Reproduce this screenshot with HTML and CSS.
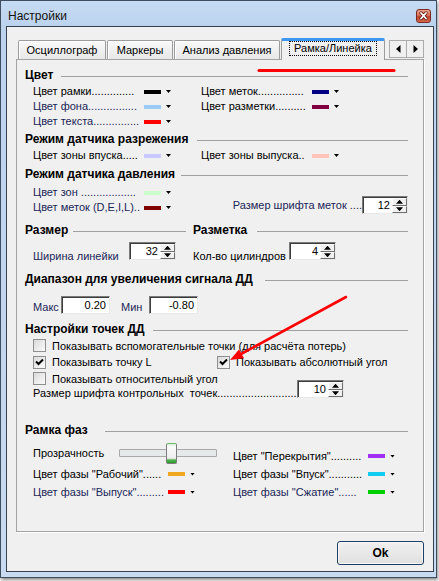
FILE: index.html
```html
<!DOCTYPE html>
<html lang="ru">
<head>
<meta charset="utf-8">
<title>Настройки</title>
<link rel="stylesheet" href="styles.css">
</head>
<body>
<div class="window">
  <div class="titlebar">
    <span class="title">Настройки</span>
    <div class="close"><svg width="13" height="12" viewBox="0 0 13 12"><path d="M4 3l5 5.5M9 3l-5 5.5" stroke="#6a2014" stroke-width="3.4" stroke-linecap="round"/><path d="M4 3l5 5.5M9 3l-5 5.5" stroke="#fff" stroke-width="1.8" stroke-linecap="round"/></svg></div>
  </div>
  <div class="client">
    <div class="tabs">
      <div class="tab w1">Осциллограф</div>
      <div class="tab w2">Маркеры</div>
      <div class="tab w3">Анализ давления</div>
      <div class="tab active"><span class="focus">Рамка/Линейка</span></div>
      <div class="tabscroll">
        <div class="tsb"><svg width="5" height="8" viewBox="0 0 5 8"><polygon points="4.5,0 4.5,8 0,4" fill="#000"/></svg></div>
        <div class="tsb"><svg width="5" height="8" viewBox="0 0 5 8"><polygon points="0.5,0 0.5,8 5,4" fill="#000"/></svg></div>
      </div>
    </div>
    <div class="panel">
      <div class="hd m8"><b class="hw36">Цвет</b><i class="rule"></i></div>
      <div class="crow m2">
        <div class="cc"><span class="lbl">Цвет рамки..............</span><i class="sw c-black"></i><i class="dd"></i></div>
        <div class="cc"><span class="lbl">Цвет меток...............</span><i class="sw c-navy"></i><i class="dd"></i></div>
      </div>
      <div class="crow">
        <div class="cc"><span class="lbl nv">Цвет фона................</span><i class="sw c-lblue"></i><i class="dd"></i></div>
        <div class="cc"><span class="lbl">Цвет разметки..........</span><i class="sw c-plum"></i><i class="dd"></i></div>
      </div>
      <div class="crow">
        <div class="cc"><span class="lbl nv">Цвет текста...............</span><i class="sw c-red"></i><i class="dd"></i></div>
      </div>

      <div class="hd m3"><b class="hw172">Режим датчика разрежения</b><i class="rule"></i></div>
      <div class="crow m2">
        <div class="cc"><span class="lbl">Цвет зоны впуска.....</span><i class="sw c-lav"></i><i class="dd"></i></div>
        <div class="cc"><span class="lbl">Цвет зоны выпуска..</span><i class="sw c-pink"></i><i class="dd"></i></div>
      </div>

      <div class="hd m4"><b class="hw156">Режим датчика давления</b><i class="rule"></i></div>
      <div class="crow m4">
        <div class="cc"><span class="lbl nv">Цвет зон ..................</span><i class="sw c-lgreen"></i><i class="dd"></i></div>
      </div>
      <div class="crow">
        <div class="cc"><span class="lbl nv">Цвет меток (D,E,I,L)..</span><i class="sw c-maroon"></i><i class="dd"></i></div>
        <div class="cc endcell"><span class="nv rlbl">Размер шрифта меток ....</span>
          <div class="spin w46"><span class="val">12</span><span class="arrows"><span class="ab"><i class="up"></i></span><span class="ab"><i class="down"></i></span></span></div>
        </div>
      </div>

      <div class="hd2 m8">
        <div class="hd half"><b class="hw48">Размер</b><i class="rule"></i></div>
        <div class="hd grow"><b class="hw64">Разметка</b><i class="rule"></i></div>
      </div>
      <div class="srow m5">
        <div class="scell"><span class="slbl nv">Ширина линейки</span>
          <div class="spin"><span class="val">32</span><span class="arrows"><span class="ab"><i class="up"></i></span><span class="ab"><i class="down"></i></span></span></div>
        </div>
        <div class="scell"><span class="slbl">Кол-во цилиндров</span>
          <div class="spin"><span class="val">4</span><span class="arrows"><span class="ab"><i class="up"></i></span><span class="ab"><i class="down"></i></span></span></div>
        </div>
      </div>

      <div class="hd m12"><b class="hw240">Диапазон для увеличения сигнала ДД</b><i class="rule"></i></div>
      <div class="erow m10">
        <span class="elbl nv">Макс</span><span class="edit">0.20</span>
        <span class="elbl nv gapl">Мин</span><span class="edit">-0.80</span>
      </div>

      <div class="hd m8"><b class="hw128">Настройки точек ДД</b><i class="rule"></i></div>
      <div class="cbrow h17 m1">
        <label class="cbi"><span class="box"></span>Показывать вспомогательные точки (для расчёта потерь)</label>
      </div>
      <div class="cbrow h16">
        <label class="cbi first"><span class="box"><svg width="9" height="8" viewBox="0 0 9 8"><polyline points="1,3.5 3.5,6 8,1.5" fill="none" stroke="#000" stroke-width="2"/></svg></span>Показывать точку L</label>
        <label class="cbi"><span class="box"><svg width="9" height="8" viewBox="0 0 9 8"><polyline points="1,3.5 3.5,6 8,1.5" fill="none" stroke="#000" stroke-width="2"/></svg></span>Показывать абсолютный угол</label>
      </div>
      <div class="cbrow h17">
        <label class="cbi"><span class="box"></span>Показывать относительный угол</label>
      </div>
      <div class="frow">
        <span class="flbl">Размер шрифта контрольных&nbsp; точек..........................</span>
        <div class="spin"><span class="val">10</span><span class="arrows"><span class="ab"><i class="up"></i></span><span class="ab"><i class="down"></i></span></span></div>
      </div>

      <div class="hd m23"><b class="hw80">Рамка фаз</b><i class="rule"></i></div>
      <div class="phase">
        <div class="pl">
          <div class="slrow">
            <span class="sllbl">Прозрачность</span>
            <div class="slider"><div class="track"></div><div class="thumb"></div></div>
          </div>
          <div class="prow"><span class="plbl">Цвет фазы "Рабочий"......</span><i class="sw c-orange"></i><i class="dd"></i></div>
          <div class="prow"><span class="plbl nv">Цвет фазы "Выпуск".........</span><i class="sw c-red"></i><i class="dd"></i></div>
        </div>
        <div class="pr">
          <div class="prow"><span class="plbl">Цвет "Перекрытия"..........</span><i class="sw c-purple"></i><i class="dd"></i></div>
          <div class="prow"><span class="plbl">Цвет фазы "Впуск"...........</span><i class="sw c-cyan"></i><i class="dd"></i></div>
          <div class="prow"><span class="plbl nv">Цвет фазы "Сжатие"......</span><i class="sw c-green"></i><i class="dd"></i></div>
        </div>
      </div>
    </div>
    <div class="footer"><div class="okbtn">Ok</div></div>
  </div>
  <svg class="annot" width="439" height="581" viewBox="0 0 439 581">
    <path d="M259 70.5H394" stroke="#ff0000" stroke-width="3" stroke-linecap="round"/>
    <path d="M346 297L241 354" stroke="#ff0000" stroke-width="2.6" stroke-linecap="round"/>
    <polygon points="230,360 244,358.2 239,349.4" fill="#ff0000"/>
  </svg>
</div>
</body>
</html>
```

FILE: styles.css
```css
* { box-sizing: border-box; }
html, body { margin: 0; padding: 0; }
body {
  width: 439px; height: 581px; overflow: hidden; background: #ffffff;
  font-family: "Liberation Sans", Arial, sans-serif; font-size: 11px; color: #000;
}
i { font-style: normal; display: block; }
label { display: flex; align-items: center; }

.window {
  position: relative; width: 437px; height: 578px;
  border: 1px solid #3f4e5e;
  background: linear-gradient(180deg, #c6dbf3 0, #bcd3ee 25px, #c2d6ee 60%, #c8dbf0 100%);
  box-shadow: 1px 2px 3px rgba(0,0,0,.45);
}
.titlebar { display: flex; justify-content: space-between; align-items: flex-start; height: 25px; padding: 0 5px 0 7px; }
.title { margin-top: 7px; line-height: 16px; font-size: 12px; color: #111; }
.close {
  margin-top: 8px; width: 15px; height: 14px; border: 1px solid #7a2a1e; border-radius: 3px;
  background: linear-gradient(180deg, #eca48f 0, #d9735b 45%, #c2452e 55%, #d56a50 100%);
  display: flex; align-items: center; justify-content: center;
}

.client {
  margin-left: 5px; width: 428px; height: 546px; border: 1px solid #35414e;
  background: #f0f0f0; padding: 11px 9px 0;
}

.tabs { display: flex; align-items: flex-end; height: 21px; padding-left: 2px; position: relative; z-index: 2; }
.tab {
  height: 19px; margin-right: 1px; border: 1px solid #9c9c9c; border-bottom: 0; border-radius: 2px 2px 0 0;
  background: linear-gradient(180deg, #f9f9f9, #e7e7e7); box-shadow: inset 1px 1px 0 #fff;
  text-align: center; line-height: 18px; white-space: nowrap;
}
.w1 { width: 88px; } .w2 { width: 66px; } .w3 { width: 106px; }
.tab.active {
  width: 104px; height: 22px; margin-bottom: -1px; border-top: 3px solid #3d97f1;
  background: #f0f0f0; box-shadow: none; display: flex; justify-content: center; align-items: flex-start;
}
.focus { border: 1px dotted #000; padding: 0 4px; line-height: 13px; height: 15px; }
.tabscroll { display: flex; margin-left: 3px; margin-bottom: 1px; height: 18px; }
.tsb { width: 18px; height: 18px; border: 1px solid #ababab; background: #f0f0f0; display: flex; align-items: center; justify-content: center; }
.tsb + .tsb { margin-left: -1px; }

.panel {
  height: 473px; border: 1px solid #a3a3a3; background: #f0f0f0; padding: 0 15px 0 8px;
  position: relative; z-index: 1; box-shadow: 1px 1px 0 #ffffff;
}

.m1 { margin-top: 1px; } .m2 { margin-top: 2px; } .m3 { margin-top: 3px; } .m4 { margin-top: 4px; }
.m5 { margin-top: 5px; } .m8 { margin-top: 8px; } .m10 { margin-top: 10px; } .m12 { margin-top: 12px; } .m23 { margin-top: 23px; }

.hd { display: flex; align-items: center; height: 14px; }
.hd b { font-size: 12px; font-weight: bold; line-height: 14px; white-space: nowrap; flex-shrink: 0; padding-right: 3px; }
.rule { flex: 1; height: 1px; background: #a0a0a0; margin-top: 3px; }
.hw36 { min-width: 36px; } .hw172 { min-width: 172px; } .hw156 { min-width: 156px; } .hw48 { min-width: 48px; }
.hw64 { min-width: 64px; } .hw240 { min-width: 240px; } .hw128 { min-width: 128px; } .hw80 { min-width: 80px; }
.hd2 { display: flex; }
.half { width: 168px; padding-right: 7px; }
.grow { flex: 1; }

.nv { color: #1b2658; }

.crow { display: flex; align-items: center; height: 15px; padding-left: 8px; }
.cc { display: flex; align-items: center; width: 168px; flex-shrink: 0; }
.lbl { width: 111px; flex-shrink: 0; white-space: nowrap; overflow: hidden; line-height: 15px; }
.sw { width: 17px; height: 4px; flex-shrink: 0; }
.dd { width: 5px; height: 3px; margin-left: 5px; background: #000; clip-path: polygon(0 0, 100% 0, 50% 100%); }
.endcell { flex: 1; width: auto; justify-content: flex-end; align-self: flex-start; margin-top: -4px; height: 18px; }
.rlbl { white-space: nowrap; line-height: 17px; }

.c-black { background: #000; } .c-navy { background: #000080; } .c-lblue { background: #9ccbf8; }
.c-plum { background: #800040; } .c-red { background: #ff0000; } .c-lav { background: #c8c8ff; }
.c-pink { background: #ffc4b8; } .c-lgreen { background: #ccffcc; } .c-maroon { background: #800000; }
.c-orange { background: #f0a820; } .c-purple { background: #a030f8; } .c-cyan { background: #10ccf0; } .c-green { background: #00d000; }

.spin {
  display: flex; width: 47px; height: 18px; flex-shrink: 0;
  border: 1px solid; border-color: #7a7a7a #e8e8e8 #e8e8e8 #7a7a7a;
  box-shadow: inset 1px 1px 0 #3c3c3c; background: #fff; padding: 1px 0 0 1px;
}
.spin.w46 { width: 46px; }
.val { flex: 1; text-align: right; padding-right: 2px; line-height: 15px; }
.arrows { width: 15px; display: flex; flex-direction: column; }
.ab {
  flex: 1; display: flex; align-items: center; justify-content: center; background: #f0f0f0;
  border: 1px solid; border-color: #fcfcfc #6e6e6e #6e6e6e #fcfcfc;
}
.up, .down { width: 7px; height: 4px; background: #000; }
.up { clip-path: polygon(50% 0, 100% 100%, 0 100%); }
.down { clip-path: polygon(0 0, 100% 0, 50% 100%); }

.srow { display: flex; height: 18px; padding-left: 8px; }
.scell { display: flex; align-items: flex-start; width: 160px; flex-shrink: 0; }
.slbl { width: 96px; line-height: 14px; margin-top: 7px; white-space: nowrap; flex-shrink: 0; }

.erow { display: flex; align-items: center; height: 18px; padding-left: 8px; }
.elbl { width: 28px; padding-top: 3px; }
.gapl { margin-left: 11px; }
.edit {
  width: 49px; height: 18px; text-align: right; padding-right: 3px; line-height: 16px; background: #fff;
  border: 1px solid; border-color: #7a7a7a #e8e8e8 #e8e8e8 #7a7a7a; box-shadow: inset 1px 1px 0 #3c3c3c;
}

.cbrow { display: flex; align-items: center; padding-left: 8px; }
.h17 { height: 17px; } .h16 { height: 16px; }
.cbi { white-space: nowrap; }
.cbi.first { width: 184px; }
.box {
  width: 13px; height: 13px; margin-right: 6px; flex-shrink: 0; border: 1px solid #8e8f8f;
  background: linear-gradient(135deg, #dadada, #fbfbfb); display: flex; align-items: center; justify-content: center;
}

.frow { display: flex; align-items: flex-start; height: 13px; padding-left: 8px; }
.flbl { width: 264px; flex-shrink: 0; line-height: 13px; white-space: nowrap; overflow: hidden; }
.frow .spin { margin-top: -7px; }

.phase { display: flex; padding-left: 8px; }
.pl { width: 200px; flex-shrink: 0; display: flex; flex-direction: column; }
.pr { flex: 1; display: flex; flex-direction: column; padding-top: 10px; }
.slrow { display: flex; align-items: center; height: 20px; margin-top: 6px; margin-bottom: 2px; }
.sllbl { width: 86px; flex-shrink: 0; }
.slider { position: relative; width: 98px; height: 20px; display: flex; align-items: center; }
.track { width: 100%; height: 8px; border: 1px solid #a9a9a9; border-radius: 1px; background: #e6e9e9; }
.thumb {
  position: absolute; left: 47px; top: 0; width: 11px; height: 21px; border: 1px solid #7c7c7c;
  border-top-color: #6ab86a; border-radius: 2px;
  background: linear-gradient(180deg, #d8f0d8 0, #fafafa 15%, #eeeeee 75%, #48b048 85%, #2f9a2f 100%);
}
.prow { display: flex; align-items: center; height: 18px; }
.plbl { width: 135px; flex-shrink: 0; white-space: nowrap; overflow: hidden; }

.footer { display: flex; justify-content: flex-end; margin-top: 9px; }
.okbtn {
  width: 87px; height: 24px; border: 1px solid #1c3e66; border-radius: 3px;
  background: linear-gradient(180deg, #f0f0f0, #e0e0e0); box-shadow: inset 0 0 0 1px #f8f8f8;
  font-weight: bold; font-size: 12px; display: flex; align-items: center; justify-content: center;
}

.annot { position: absolute; left: -1px; top: -1px; pointer-events: none; z-index: 10; }
```
